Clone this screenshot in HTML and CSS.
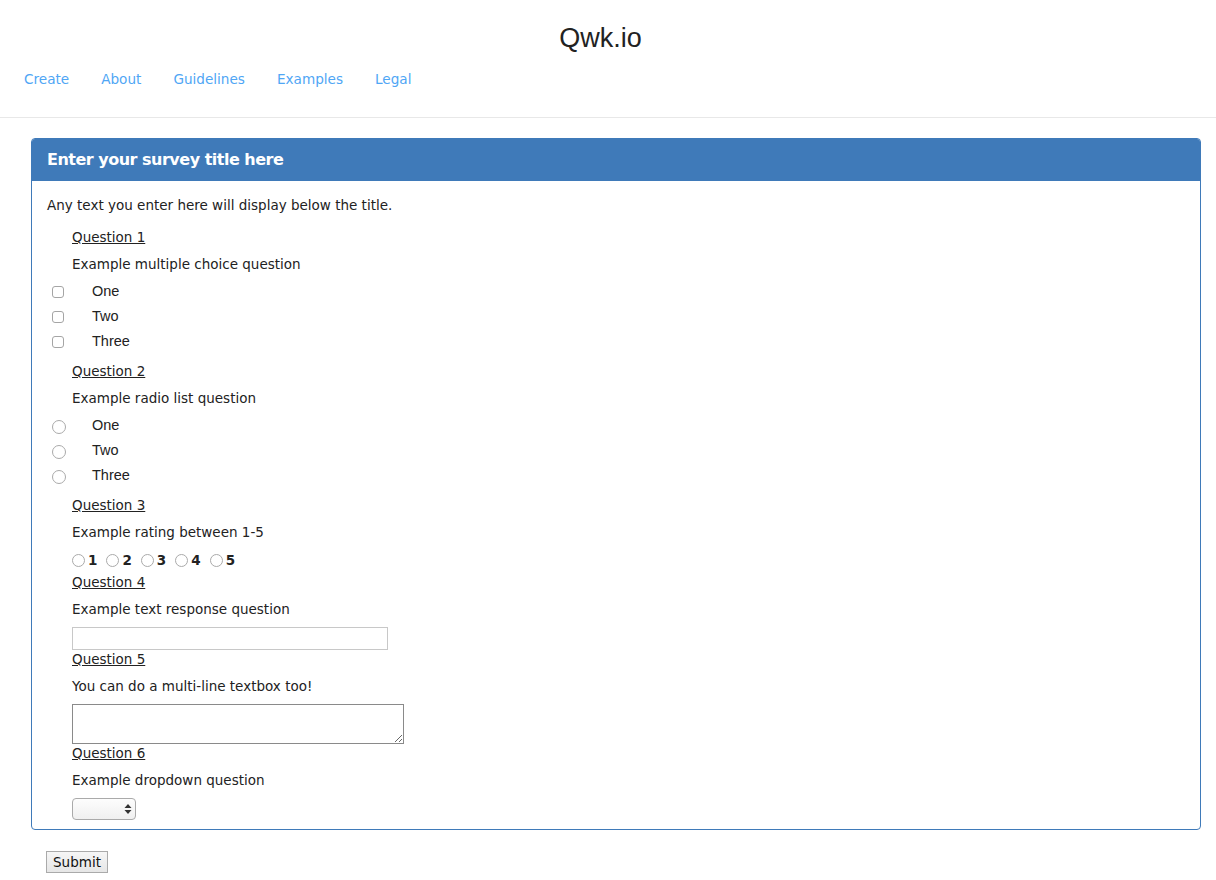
FILE: index.html
```html
<!DOCTYPE html>
<html>
<head>
<meta charset="utf-8">
<title>Qwk.io</title>
<link rel="stylesheet" href="styles.css">
</head>
<body>
<header class="site-header">
  <h1 class="brand">Qwk.io</h1>
  <nav class="nav">
    <a href="#">Create</a>
    <a href="#">About</a>
    <a href="#">Guidelines</a>
    <a href="#">Examples</a>
    <a href="#">Legal</a>
  </nav>
</header>
<main class="main">
  <form class="survey">
    <section class="panel">
      <div class="panel-heading">Enter your survey title here</div>
      <div class="panel-body">
        <p class="desc">Any text you enter here will display below the title.</p>

        <div class="question q-first">
          <div class="q-label">Question 1</div>
          <div class="q-text">Example multiple choice question</div>
          <div class="choices">
            <label class="choice"><input type="checkbox" class="box"><span>One</span></label>
            <label class="choice"><input type="checkbox" class="box"><span>Two</span></label>
            <label class="choice"><input type="checkbox" class="box"><span>Three</span></label>
          </div>
        </div>

        <div class="question">
          <div class="q-label">Question 2</div>
          <div class="q-text">Example radio list question</div>
          <div class="choices">
            <label class="choice"><input type="radio" name="q2" class="round"><span>One</span></label>
            <label class="choice"><input type="radio" name="q2" class="round"><span>Two</span></label>
            <label class="choice"><input type="radio" name="q2" class="round"><span>Three</span></label>
          </div>
        </div>

        <div class="question">
          <div class="q-label">Question 3</div>
          <div class="q-text">Example rating between 1-5</div>
          <div class="rating">
            <label class="rate"><input type="radio" name="q3" class="round small"><b>1</b></label>
            <label class="rate"><input type="radio" name="q3" class="round small"><b>2</b></label>
            <label class="rate"><input type="radio" name="q3" class="round small"><b>3</b></label>
            <label class="rate"><input type="radio" name="q3" class="round small"><b>4</b></label>
            <label class="rate"><input type="radio" name="q3" class="round small"><b>5</b></label>
          </div>
        </div>

        <div class="question tight">
          <div class="q-label">Question 4</div>
          <div class="q-text">Example text response question</div>
          <input type="text" class="text-input">
        </div>

        <div class="question flush">
          <div class="q-label">Question 5</div>
          <div class="q-text">You can do a multi-line textbox too!</div>
          <textarea class="textarea"></textarea>
        </div>

        <div class="question flush">
          <div class="q-label">Question 6</div>
          <div class="q-text">Example dropdown question</div>
          <div class="select-wrap">
            <select class="select"><option></option></select>
            <svg class="select-arrows" width="8" height="12" viewBox="0 0 8 12"><path d="M4 1 L7.5 5 L0.5 5 Z M4 11 L7.5 7 L0.5 7 Z" fill="#333"/></svg>
          </div>
        </div>
      </div>
    </section>
    <button type="button" class="submit">Submit</button>
  </form>
</main>
</body>
</html>
```
FILE: styles.css
```css
html, body {
  margin: 0;
  padding: 0;
  background: #fff;
}
body {
  font-family: "DejaVu Sans", Verdana, sans-serif;
  font-size: 13.5px;
  color: #222;
}
.site-header {
  border-bottom: 1px solid #e8e8e8;
  height: 118px;
  box-sizing: border-box;
}
.brand {
  margin: 0;
  padding: 23px 15px 0 0;
  text-align: center;
  font-family: "Liberation Sans", Arial, sans-serif;
  font-weight: normal;
  font-size: 27px;
  line-height: 30px;
  color: #222;
}
.nav {
  display: flex;
  padding: 0 8px;
  margin-top: 16px;
}
.nav a {
  padding: 0 16px;
  color: #4fa6f5;
  text-decoration: none;
  font-size: 13.6px;
  line-height: 20px;
}
.main {
  padding: 20px 0 0 31px;
}
.survey {
  width: 1170px;
}
.panel {
  border: 1px solid #3f7ab9;
  border-radius: 4px;
  overflow: hidden;
}
.panel-heading {
  background: #3f7ab9;
  color: #fff;
  font-weight: bold;
  font-size: 16px;
  letter-spacing: -0.5px;
  height: 42px;
  line-height: 42px;
  padding: 0 15px;
}
.panel-body {
  padding: 14px 15px 9px 15px;
}
.desc {
  margin: 0;
  line-height: 20px;
}
.question {
  margin-top: 11px;
  padding-left: 25px;
}
.question.q-first {
  margin-top: 13px;
}
.question.tight {
  margin-top: 3px;
}
.question.flush {
  margin-top: 0;
}
.q-label {
  text-decoration: underline;
  line-height: 18px;
}
.q-text {
  margin-top: 8px;
  line-height: 20px;
}
.choices {
  margin-top: 7px;
  margin-left: -25px;
  display: flex;
  flex-direction: column;
  gap: 5px;
}
.choice {
  display: flex;
  align-items: center;
  height: 20px;
  font-family: "Liberation Sans", Arial, sans-serif;
  font-size: 14.5px;
}
.choice span {
  margin-left: 28px;
}
.box {
  appearance: none;
  -webkit-appearance: none;
  margin: 2px 0 0 5px;
  width: 12px;
  height: 12px;
  border: 1px solid #a5a5a5;
  border-radius: 3px;
  background: #fff;
  box-sizing: border-box;
}
.round {
  appearance: none;
  -webkit-appearance: none;
  margin: 3px 0 0 5px;
  width: 14px;
  height: 14px;
  border: 1px solid #aaa;
  border-radius: 50%;
  background: #fff;
  box-sizing: border-box;
}
.choice .round + span {
  margin-left: 26px;
}
.rating {
  margin-top: 8px;
  display: flex;
  height: 20px;
  align-items: center;
  gap: 9px;
}
.rate {
  display: flex;
  align-items: center;
}
.rate b {
  margin-left: 3px;
  font-weight: bold;
}
.round.small {
  margin: 1px 0 0 0;
  width: 13px;
  height: 13px;
}
.text-input {
  display: block;
  margin: 8px 0 0 0;
  width: 316px;
  height: 23px;
  box-sizing: border-box;
  border: 1px solid #c8c8c8;
  padding: 2px 4px;
  font: inherit;
}
.textarea {
  display: block;
  margin: 8px 0 0 0;
  width: 332px;
  height: 40px;
  box-sizing: border-box;
  border: 1px solid #8a8a8a;
  font: inherit;
}
.select-wrap {
  position: relative;
  display: inline-block;
  margin-top: 8px;
}
.select {
  appearance: none;
  -webkit-appearance: none;
  display: block;
  width: 64px;
  height: 22px;
  border: 1px solid #aaa;
  border-radius: 4px;
  background: linear-gradient(#fdfdfd, #f0f0f0);
  box-sizing: border-box;
}
.select-arrows {
  position: absolute;
  right: 4px;
  top: 5px;
  pointer-events: none;
}
.submit {
  margin: 21px 0 0 15px;
  width: 62px;
  height: 22px;
  padding: 0;
  border: 1px solid #aaa;
  background: linear-gradient(#f6f6f6, #e6e6e6);
  font-family: "DejaVu Sans", Verdana, sans-serif;
  font-size: 13.5px;
  color: #111;
}
```
